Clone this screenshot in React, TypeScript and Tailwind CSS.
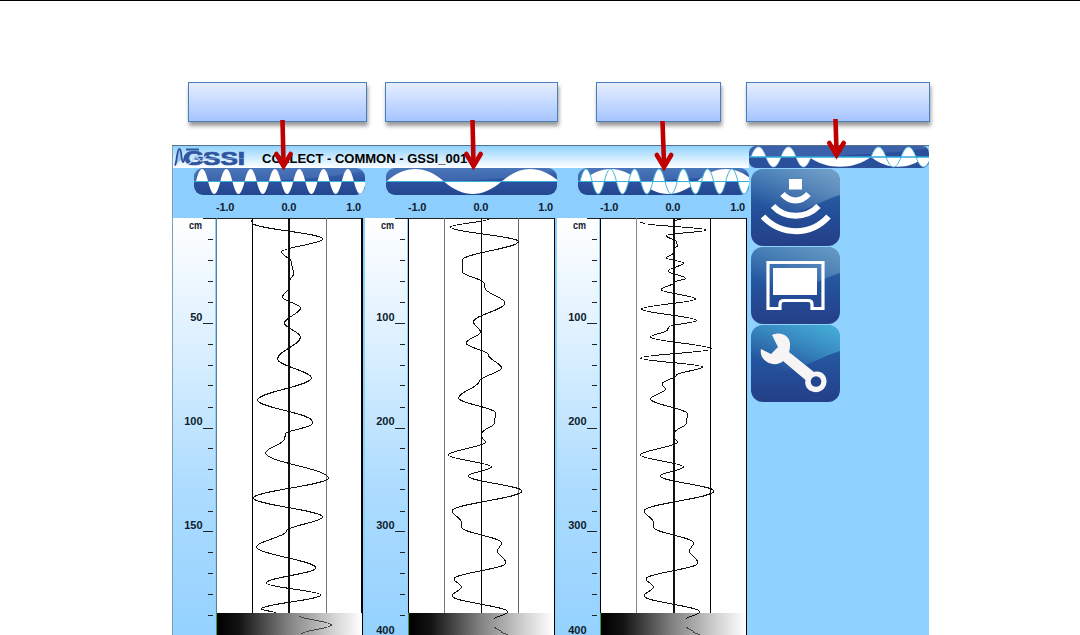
import React from "react";

type Point = [number, number];

// Turning points of each trace: [offset from the zero line, depth], one array per unbroken piece
const highFreq: Point[][] = [
  [[-38, 2], [-37, 5], [33.5, 21], [-8, 34], [2, 44], [4, 56], [0, 63]],
  [[0, 69], [-7, 79], [11, 90], [-5, 105], [11, 119], [-12, 141], [22, 160], [-32, 182], [22.5, 203], [22.5, 206], [-4, 216], [-5, 221], [-24, 235], [39, 260], [-36, 280], [33, 299], [-3, 313], [-33, 329], [26.5, 350], [-23.5, 365], [31, 377], [-28, 391], [-14, 395]],
  [[9, 397.5], [42, 407], [12, 416]],
];

const lowFreq: Point[][] = [
  [[7, 1], [-31, 9], [37, 23.5], [-19, 42], [-19, 54], [2.5, 65], [3.5, 70], [23.5, 85], [-8, 104], [-1, 114], [-15.5, 125], [7, 137], [20, 150], [-2, 163], [-23, 180], [14, 195], [13, 205], [0.5, 215]],
  [[0.5, 219], [4, 224], [-33, 237], [10, 249], [-13.5, 258], [40.5, 273], [-29.5, 293], [-20, 304], [-20, 309], [20, 325], [16, 333], [24.5, 345], [-27.5, 361], [-20, 369], [-29.5, 378], [26.5, 394], [13, 401]],
  [[13, 409], [20, 414], [26, 417]],
];

const blended: Point[][] = [
  [[7, 1], [0, 3]],
  [[-33, 4], [-31, 5], [33, 12], [-7.5, 17.5], [3, 24], [4, 28], [0, 31]],
  [[0, 35], [-7, 40], [10, 45], [-5.5, 53], [12, 60.5], [1, 64]],
  [[0, 65], [-12.5, 71.5], [22, 81], [-32, 91], [23, 102.5], [-5, 109], [-6, 112], [-23, 119], [38, 131], [-33, 140], [29, 149], [3, 157], [-11.5, 166], [-8, 171], [-23, 181], [14, 196], [13, 205], [0.5, 215]],
  [[0.5, 219], [4, 224], [-33, 237], [10, 249], [-13.5, 258], [40.5, 273], [-29.5, 293], [-20, 304], [-20, 309], [20, 325], [16, 333], [24.5, 345], [-27.5, 361], [-20, 369], [-29.5, 378], [26.5, 394], [13, 401]],
  [[13, 409], [20, 414], [26, 417]],
];

const smooth = (pts: Point[]) =>
  pts
    .map(([x, y], i) => {
      if (i === 0) return `M${x} ${y}`;
      const [px, py] = pts[i - 1];
      const k = (y - py) * 0.36;
      return `C${px} ${py + k} ${x} ${y - k} ${x} ${y}`;
    })
    .join(" ");

// Sine wave, first rising through the centre line at x0
const wave = (x0: number, half: number, count: number, mid: number, amp: number) => {
  let d = `M${x0} ${mid}`;
  for (let i = 0; i < count; i++) {
    const a = x0 + i * half;
    const top = mid + (i % 2 === 0 ? -1 : 1) * amp * 1.33;
    d += ` C${a + half * 0.33} ${top} ${a + half * 0.67} ${top} ${a + half} ${mid}`;
  }
  return d;
};

const Callout = ({ className, shaft, tip }: { className: string; shaft: Point; tip: Point }) => {
  const [tx, ty] = tip;
  return (
    <div
      className={`relative h-10 border border-[#4a7ebb] bg-linear-to-b from-[#e6eeff] to-[#a6c5ff] shadow-[1px_4px_4px_rgba(0,0,0,0.4)] ${className}`}
    >
      <svg className="absolute -top-px -left-px z-20 overflow-visible" width="40" height="40">
        <path d={`M${shaft[0]} ${shaft[1]} L${tx} ${ty - 8}`} stroke="#c00000" strokeWidth="4.6" fill="none" />
        <path
          d={`M${tx - 7.2} ${ty - 16} L${tx} ${ty - 4} L${tx + 7.2} ${ty - 16}`}
          stroke="#c00000"
          strokeWidth="4.6"
          strokeLinecap="round"
          fill="none"
        />
      </svg>
    </div>
  );
};

const Logo = () => (
  <svg width="72" height="22" viewBox="0 0 72 22">
    <path
      d="M1 19.500 C3 15 3 3 5.500 3 C8 3 7 16 9 16 C10.500 16 10.500 9 12 9"
      fill="#9cc4ee"
      stroke="#2b4f9c"
      strokeWidth="1.800"
    />
    <g fill="#2f559f" stroke="#2f559f" strokeWidth="0.700" fontWeight="700" fontFamily="Liberation Sans, sans-serif">
      <text x="10" y="19" fontSize="21" textLength="20" lengthAdjust="spacingAndGlyphs">
        G
      </text>
      <text x="29" y="19" fontSize="18" textLength="42" lengthAdjust="spacingAndGlyphs">
        SSI
      </text>
    </g>
    <path d="M12 3.500 H25" stroke="#2f559f" strokeWidth="2" />
    <path d="M14 18 C19 17 19 11 22 11 C25 11 25 16 28 15 C30 14 30 10 33 10" fill="none" stroke="#b5d5f4" strokeWidth="1.200" />
    <path d="M14 12.500 H71" stroke="#a9cdf0" strokeWidth="0.600" opacity="0.7" />
  </svg>
);

const Pill = ({ kind }: { kind: "high" | "low" | "both" }) => (
  <svg className="block overflow-visible" width="171" height="27" viewBox="0 0 171 27">
    <defs>
      <linearGradient id={`pill-${kind}`} x1="0" y1="0" x2="0" y2="1">
        <stop offset="0" stopColor="#3d6cb2" />
        <stop offset="0.5" stopColor="#2c51a0" />
        <stop offset="1" stopColor="#24468f" />
      </linearGradient>
      <clipPath id={`clip-${kind}`}>
        <rect width="171" height="27" rx="9" />
      </clipPath>
    </defs>
    <g clipPath={`url(#clip-${kind})`}>
      <rect width="171" height="27" fill={`url(#pill-${kind})`} />
      <path d="M60 13.500 C100 12 140 9 171 3 V0 H0 V13.500 Z" fill="#6a93cc" opacity="0.28" />
      {kind !== "high" && <path d={wave(kind === "low" ? 0.5 : 4, 57.5, 3, 13.5, 12.5)} fill="#fff" />}
      {kind !== "low" && <path d={wave(2, 12.15, 14, 13.5, 12.5)} fill="#fff" />}
      {kind === "both" && <path d={wave(2, 12.15, 14, 13.5, 12.5)} fill="none" stroke="#3fb4d6" strokeWidth="1" />}
      <path d="M0 13.500 H171" stroke="#35b0dc" strokeWidth="1.200" />
    </g>
  </svg>
);

const ModePill = () => (
  <svg className="ml-px block" width="180" height="22" viewBox="0 0 180 22">
    <clipPath id="clip-mode">
      <rect width="180" height="22" rx="7" />
    </clipPath>
    <g clipPath="url(#clip-mode)">
      <rect width="180" height="22" fill="#2a509c" />
      <path d="M60 11 C100 9 150 7 180 2 V0 H0 V11 Z" fill="#5f8bc8" opacity="0.3" />
      <path d="M60 11 C78 24 104 24 122 11 Z" fill="#fff" />
      <path d="M122 11 C138 24 160 24 176 11 Z" fill="#fff" />
      <path d={wave(2, 15, 4, 11, 10)} fill="#fff" stroke="#8fd4ee" strokeWidth="0.700" />
      <path d={wave(122, 15, 4, 11, 10)} fill="#fff" stroke="#4ab9dc" strokeWidth="1" />
      <path d="M0 11 H180" stroke="#2ba9dd" strokeWidth="1.400" />
    </g>
  </svg>
);

const ticks = [21, 42, 63, 84, 126, 147, 167, 189, 230, 251, 271, 293, 334, 355, 376, 397];
const majors = [105, 210, 313, 417];

// Line looks differ a little from scope to scope
const columns = [
  { kind: "high" as const, trace: highFreq, labels: ["50", "100", "150"], lines: ["#5b7f99", "#000", "#111", "#777", "#000"], zeroX: 116, zero: 2, right: 2 },
  { kind: "low" as const, trace: lowFreq, labels: ["100", "200", "300", "400"], lines: ["#000", "#777", "#000", "#666", "#000"], zeroX: 117, zero: 1, right: 1 },
  { kind: "both" as const, trace: blended, labels: ["100", "200", "300", "400"], lines: ["#000", "#888", "#111", "#000", "#000"], zeroX: 117, zero: 2, right: 1 },
];

const Scope = ({ column }: { column: (typeof columns)[number] }) => {
  const { kind, trace, labels, lines, zeroX, zero, right } = column;
  return (
    <div className="flex w-48 shrink-0 flex-col">
      <div className="flex h-[50px] flex-col justify-between">
        <div className="pl-[21.5px]">
          <Pill kind={kind} />
        </div>
        <div className="flex justify-between pr-[3px] pb-[3px] pl-[44px] text-[11px] leading-4 font-bold tracking-[-0.2px] text-[#10202c]">
          <span>-1.0</span>
          <span className="pr-[3px]">0.0</span>
          <span>1.0</span>
        </div>
      </div>
      <svg className="block" width="192" height="417" viewBox="0 0 192 417">
        <defs>
          <linearGradient id={`ruler-${kind}`} x1="0" y1="0" x2="0" y2="1">
            <stop offset="0" stopColor="#ffffff" />
            <stop offset="0.3" stopColor="#dcf0ff" />
            <stop offset="0.65" stopColor="#addcff" />
            <stop offset="1" stopColor="#94d2ff" />
          </linearGradient>
          <linearGradient id={`gray-${kind}`} x1="0" y1="0" x2="1" y2="0">
            <stop offset="0" stopColor="#000" />
            <stop offset="0.15" stopColor="#121212" />
            <stop offset="0.5" stopColor="#848484" />
            <stop offset="0.8" stopColor="#d2d2d2" />
            <stop offset="1" stopColor="#fff" />
          </linearGradient>
        </defs>
        <rect x="1" y="0" width="42" height="417" fill={`url(#ruler-${kind})`} />
        <rect x="44" y="0" width="147" height="417" fill="#fff" />
        <g shapeRendering="crispEdges">
          <path d="M31 0.500 H190" stroke="#222" />
          {ticks.map((y) => (
            <path key={y} d={`M36 ${y + 0.5} H41`} stroke="#222" />
          ))}
          {majors.map((y) => (
            <path key={y} d={`M31 ${y + 0.5} H41`} stroke="#222" />
          ))}
          <path d="M44.500 0 V417" stroke={lines[0]} />
          <path d="M80.500 0 V395" stroke={lines[1]} />
          <rect x={zeroX} y="0" width={zero} height="395" fill={lines[2]} />
          <path d="M154.500 0 V395" stroke={lines[3]} />
          <rect x={191 - right} y="0" width={right} height="417" fill={lines[4]} />
          <rect x="45" y="395" width="145" height="22" fill={`url(#gray-${kind})`} />
          <path d="M44.500 395 V417" stroke="#3c9a3c" />
        </g>
        <g transform="translate(117.500 0)" fill="none" strokeWidth="1">
          {trace.map((piece, i) => (
            <path key={i} d={smooth(piece)} stroke={piece[0][1] > 396 ? "#444" : "#111"} shapeRendering="crispEdges" />
          ))}
        </g>
        <g fontSize="11" fontWeight="700" fill="#10202c" textAnchor="end">
          <text x="30" y="10.500" fontSize="10" textLength="13" lengthAdjust="spacingAndGlyphs">
            cm
          </text>
          {labels.map((label, i) => (
            <text key={label} x="30.500" y={[103, 207, 311, 416][i]}>
              {label}
            </text>
          ))}
        </g>
      </svg>
    </div>
  );
};

const ToolButton = ({ id, gloss, children }: { id: string; gloss: string; children: React.ReactNode }) => (
  <button className="block h-[77px] w-[89px] overflow-hidden rounded-xl bg-linear-to-b from-[#2f70ae] via-[#24529c] to-[#243f88]">
    <svg width="89" height="77" viewBox="0 0 89 77">
      <defs>
        <linearGradient id={id} x1="0" y1="1" x2="1" y2="0">
          <stop offset="0.2" stopColor={gloss} stopOpacity="0" />
          <stop offset="1" stopColor={gloss} stopOpacity="0.9" />
        </linearGradient>
      </defs>
      <path d="M0 0 H89 V26 C68 33 60 39 45 43 C28 48 12 50 0 50 Z" fill={`url(#${id})`} />
      {children}
    </svg>
  </button>
);

const App = () => {
  return (
    <main className="h-[635px] w-[1080px] overflow-hidden border-t border-black bg-white font-['Liberation_Sans',sans-serif]">
      <div className="mt-[81px] flex pl-[188px]">
        <Callout className="mr-[18px] w-[179px]" shaft={[94.5, 38]} tip={[95.5, 88]} />
        <Callout className="mr-[38px] w-[173px]" shaft={[87.5, 38]} tip={[88.5, 88]} />
        <Callout className="mr-[25px] w-[125px]" shaft={[66.5, 39]} tip={[68, 89]} />
        <Callout className="w-[184px]" shaft={[89.5, 37]} tip={[90.5, 77]} />
      </div>

      <div className="mt-[23px] ml-[172px] flex h-[490px] w-[757px] border-t border-[#56728a] bg-[#8fd2ff]">
        <section className="flex w-[577px] flex-col border-l border-[#7d9fb5] bg-linear-to-b from-[#8ccfff] to-[#8fd2ff]">
          <header className="flex h-[22px] items-center bg-linear-to-b from-[#90d2fc] to-white">
            <div className="ml-px w-[88px]">
              <Logo />
            </div>
            <h1 className="pt-1 text-[13px] leading-4 font-bold whitespace-pre text-black">COLLECT - COMMON - GSSI_001</h1>
          </header>
          <div className="-ml-px flex">
            {columns.map((column) => (
              <Scope key={column.kind} column={column} />
            ))}
          </div>
        </section>

        <aside className="flex w-[180px] flex-col">
          <div className="-ml-px h-[22px]">
            <ModePill />
          </div>
          <nav className="flex flex-col gap-px pt-px pl-[2px]">
            <ToolButton id="gloss-scan" gloss="#7fa8cc">
              <rect x="38" y="10" width="13" height="10.500" fill="#fff" />
              <g fill="none" stroke="#fff" strokeWidth="6">
                <path d="M31.500 25 C39 33.500 50 33.500 57.500 25" />
                <path d="M22 37 C34 50 55 50 67.500 37" />
                <path d="M12 47.500 C30 67 60 67 77.500 47.500" />
              </g>
            </ToolButton>
            <ToolButton id="gloss-screen" gloss="#6f9fc6">
              <rect x="22" y="21" width="44" height="27" fill="#fff" />
              <path
                d="M17 15.500 H72 V61.500 H61 V57 Q61 53.500 57 53.500 H33 Q29 53.500 29 57 V61.500 H17 Z"
                fill="none"
                stroke="#fff"
                strokeWidth="3.200"
              />
            </ToolButton>
            <ToolButton id="gloss-tools" gloss="#48b6de">
              <path
                d="M21 10 C29 6 38 10 39 18 C39 22 39 24 38 27 L63 47 C70 45 76 50 75.500 57 C75 64 69 68 63 67 C57 66 53 61 54.500 55 L32 36 C28 40 21 40 16 37 C11 34 9 29 10 24 L20 29 L27 22 Z"
                fill="#f6f4f4"
              />
              <circle cx="65" cy="56.500" r="5.300" fill="#22458f" />
            </ToolButton>
          </nav>
        </aside>
      </div>
    </main>
  );
};

export default App;
